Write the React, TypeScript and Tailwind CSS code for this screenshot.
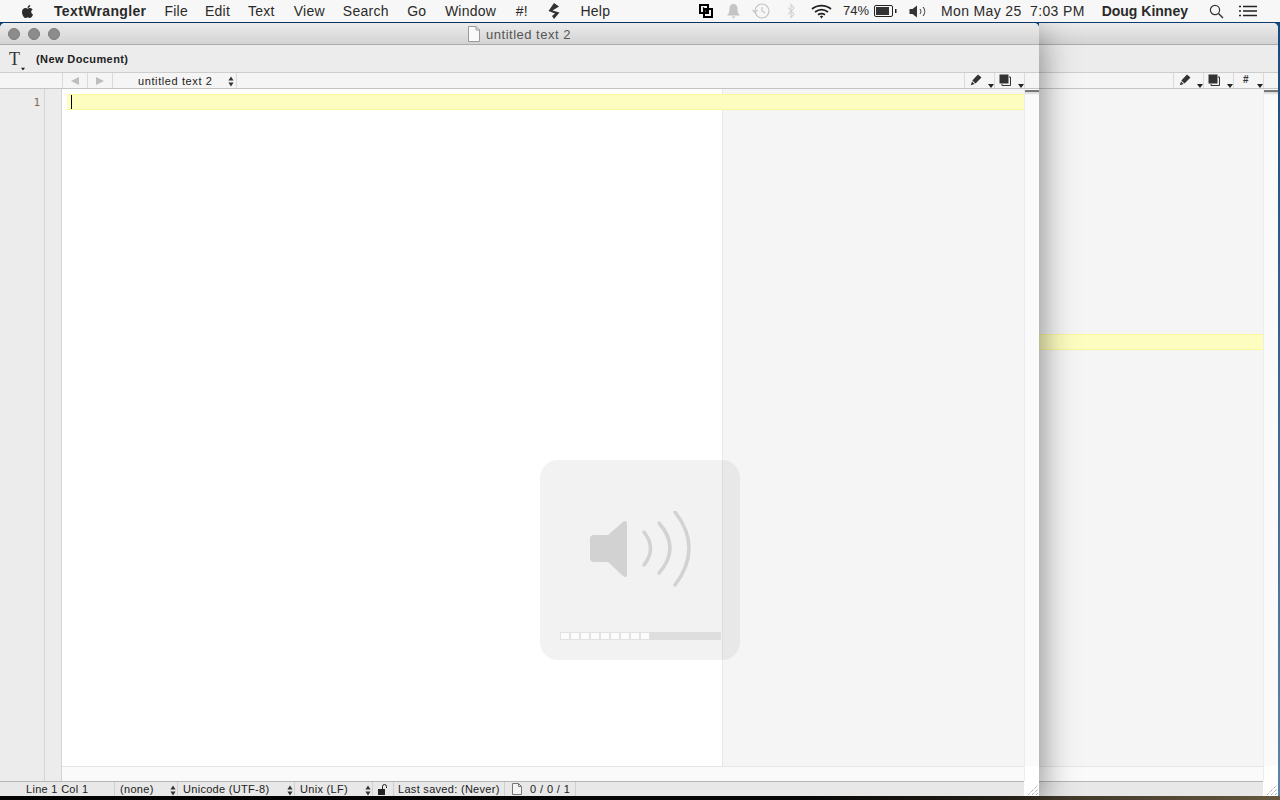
import React from "react";
import { FaApple } from "react-icons/fa";

const sans = "font-['Liberation_Sans',Arial,sans-serif]";

function Updown({ className = "" }: { className?: string }) {
  return (
    <svg width="6" height="11" viewBox="0 0 6 11" className={className}>
      <path d="M3 0.5 L5.6 4.4 H0.4 Z M3 10.5 L5.6 6.6 H0.4 Z" fill="#333" />
    </svg>
  );
}

function Caret({ className = "" }: { className?: string }) {
  return (
    <svg width="6" height="4" viewBox="0 0 6 4" className={className}>
      <path d="M0 0 H6 L3 4 Z" fill="#222" />
    </svg>
  );
}

function Pencil() {
  return (
    <svg width="12" height="12" viewBox="0 0 12 12">
      <path d="M8 0.5 L11.5 3.5 L5.5 9.5 L2.3 6.4 Z M2 7.4 L4.6 10 L0.8 11.2 Z" fill="#333" />
    </svg>
  );
}

function Docs() {
  return (
    <svg width="12" height="12" viewBox="0 0 12 12">
      <rect x="0.5" y="0.5" width="9" height="9" fill="#333" />
      <path d="M10 3 H11.5 V11.5 H3 V10" fill="none" stroke="#333" />
    </svg>
  );
}

function Tools({ hash }: { hash?: boolean }) {
  return (
    <div className="flex h-[15px] items-stretch">
      <div className="relative flex w-[30px] border-l border-[#dadada] pl-[5px] pt-[1px]">
        <Pencil />
        <Caret className="absolute left-[23px] top-[11px]" />
      </div>
      <div className="relative flex w-[30px] border-l border-[#dadada] pl-[4px] pt-[1px]">
        <Docs />
        <Caret className="absolute left-[23px] top-[11px]" />
      </div>
      {hash && (
        <div className={`relative flex w-[30px] border-l border-[#dadada] pl-[9px] text-[10px] font-bold leading-[14px] text-[#333] ${sans}`}>
          #
          <Caret className="absolute left-[23px] top-[11px]" />
        </div>
      )}
      <div className="w-px bg-[#dadada]" />
    </div>
  );
}

function Grip() {
  return (
    <div className="relative h-[15px] w-[15px] bg-white">
      <svg width="12" height="12" viewBox="0 0 12 12" className="absolute bottom-0 right-0">
        <path d="M1 11 L11 1 M5 11 L11 5 M9 11 L11 9" stroke="#8a8a8a" strokeWidth="1" strokeDasharray="1 1" fill="none" />
      </svg>
    </div>
  );
}

function Scrollbar() {
  return (
    <div className="flex w-[15px] flex-col border-l border-[#ececec] bg-[#fafafa]">
      <div className="mt-[1px] h-[5px] border-t-2 border-[#777] bg-gradient-to-b from-[#d0d0d0] to-[#fafafa]" />
      <div className="flex-1" />
      <div className="h-[15px] bg-white" />
    </div>
  );
}

function StatusCell({ w, label, pl = 5, arrows = true }: { w: number; label: string; pl?: number; arrows?: boolean }) {
  return (
    <div style={{ width: w, paddingLeft: pl }} className="relative flex items-center whitespace-nowrap border-r border-[#cfcfcf]">
      {label}
      {arrows && <Updown className="absolute right-[1px] top-[3px]" />}
    </div>
  );
}

const menu: [string, number][] = [
  ["File", 17],
  ["Edit", 18],
  ["Text", 19],
  ["View", 18],
  ["Search", 18.5],
  ["Go", 18.5],
  ["Window", 19.5],
  ["#!", 19.5],
];

export default function App() {
  return (
    <div className={`relative flex h-[800px] w-[1280px] flex-col overflow-hidden bg-gradient-to-b from-[#0f4a80] to-[#5a85a8] ${sans}`}>
      {/* menu bar */}
      <div className="relative z-20 flex h-[22px] items-center bg-[#f7f7f7] text-[14px] tracking-[0.25px] text-[#2a2a2a]">
        <FaApple className="ml-[20px] h-[15px] w-[15px] text-[#2c2c2c]" />
        <span className="ml-[19px] font-bold tracking-[0.35px]">TextWrangler</span>
        <div className="ml-[18px] flex items-center">
          {menu.map(([m, gap]) => (
            <span key={m} style={{ marginRight: gap }}>{m}</span>
          ))}
          <svg width="14" height="16" viewBox="0 0 14 16" className="mr-[19px]">
            <path d="M7 0 L12 3.5 L5.5 7.5 L12.5 9.5 L7 16 L5 13 L8 10.5 L1.5 8 Z" fill="#333" />
          </svg>
          <span>Help</span>
        </div>
        <div className="flex-1" />
        <div className="flex items-center">
          <svg width="14" height="14" viewBox="0 0 14 14" className="mr-[13px]">
            <path d="M1 1 H9 V9 H1 Z M5 5 H13 V13 H5 Z" fill="none" stroke="#000" strokeWidth="2" />
            <path d="M4 3.5 L8 7.5 M5 8 H8 V5" fill="none" stroke="#000" strokeWidth="1.2" />
          </svg>
          <svg width="15" height="16" viewBox="0 0 15 16" className="mr-[11px]">
            <path d="M7.5 1 C4.5 1 3.5 3.5 3.5 6 C3.5 9.5 2.5 11 1 12.5 H14 C12.5 11 11.5 9.5 11.5 6 C11.5 3.5 10.5 1 7.5 1 Z M5.5 13.5 H9.5 L7.5 15.5 Z" fill="#c4c4c4" />
          </svg>
          <svg width="18" height="16" viewBox="0 0 18 16" className="mr-[17px]">
            <circle cx="10" cy="8" r="7" fill="none" stroke="#c4c4c4" strokeWidth="1.2" />
            <path d="M10 4 V8 L13 10 M0.5 7 L3 9.5 L5.5 7" fill="none" stroke="#c4c4c4" strokeWidth="1.2" />
          </svg>
          <svg width="8" height="16" viewBox="0 0 8 16" className="mr-[16px]">
            <path d="M1 4.5 L7 11 L4 14.5 V1.5 L7 5 L1 11.5" fill="none" stroke="#d0d0d0" strokeWidth="1.1" />
          </svg>
          <svg width="21" height="15" viewBox="0 0 21 15" className="mr-[11px]">
            <path d="M1 5 C6.5 0.5 14.5 0.5 20 5 M4 8 C8 5 13 5 17 8 M7 10.8 C9.2 9.4 11.8 9.4 14 10.8" fill="none" stroke="#222" strokeWidth="1.8" />
            <path d="M8.8 12.4 L10.5 11.4 L12.2 12.4 L10.5 14.4 Z" fill="#222" />
          </svg>
          <span className="mr-[5px] text-[13px] tracking-normal">74%</span>
          <svg width="23" height="12" viewBox="0 0 23 12" className="mr-[12px]">
            <rect x="0.5" y="0.5" width="18" height="11" rx="1.5" fill="none" stroke="#222" />
            <rect x="2" y="2" width="13" height="8" fill="#333" />
            <rect x="21" y="4" width="1.5" height="4" fill="#222" />
          </svg>
          <svg width="19" height="13" viewBox="0 0 19 13" className="mr-[13px]">
            <path d="M0.5 4 H3.5 L8 0.5 V12.5 L3.5 9 H0.5 Z" fill="#333" />
            <path d="M11 4 C12.2 5.5 12.2 7.5 11 9 M14 2 C16.3 4.5 16.3 8.5 14 11" fill="none" stroke="#333" />
          </svg>
          <span className="mr-[17px] tracking-[0.35px]">Mon May 25&nbsp; 7:03 PM</span>
          <span className="mr-[21px] font-bold tracking-normal">Doug Kinney</span>
          <svg width="15" height="15" viewBox="0 0 15 15" className="mr-[16px]">
            <circle cx="6" cy="6" r="4.6" fill="none" stroke="#333" strokeWidth="1.2" />
            <path d="M9.5 9.5 L14 14" stroke="#333" strokeWidth="1.4" />
          </svg>
          <svg width="18" height="12" viewBox="0 0 18 12" className="-ml-[1px] mr-[23px]">
            <path d="M0 1.5 H2 M4 1.5 H18 M0 6 H2 M4 6 H18 M0 10.5 H2 M4 10.5 H18" stroke="#222" strokeWidth="1.4" />
          </svg>
        </div>
      </div>

      {/* desktop */}
      <div className="relative flex flex-1 flex-col">
        <div className="h-[1px] bg-[#0c3d70]" />
        <div className="flex h-[773px]">
          {/* front window */}
          <div className="relative z-10 flex w-[1039px] flex-col overflow-hidden rounded-t-[5px] bg-[#ececec] shadow-[0_10px_36px_rgba(0,0,0,0.5)]">
            <div className="relative flex h-[22px] items-center justify-center border-b border-[#acacac] bg-gradient-to-b from-[#ececec] to-[#d3d3d3] pt-[2px]">
              <div className="absolute left-[8px] top-[5px] flex gap-[8px]">
                <span className="h-[12px] w-[12px] rounded-full border border-[#7c7c7c] bg-[#8c8c8c]" />
                <span className="h-[12px] w-[12px] rounded-full border border-[#7c7c7c] bg-[#8c8c8c]" />
                <span className="h-[12px] w-[12px] rounded-full border border-[#7c7c7c] bg-[#8c8c8c]" />
              </div>
              <svg width="12" height="16" viewBox="0 0 12 16" className="-mt-[1px] mr-[6px]">
                <path d="M0.5 0.5 H8 L11.5 4 V15.5 H0.5 Z" fill="#fafafa" stroke="#9a9a9a" />
                <path d="M8 0.5 V4 H11.5" fill="none" stroke="#9a9a9a" />
              </svg>
              <span className="text-[13px] tracking-[0.5px] text-[#555]">untitled text 2</span>
            </div>
            <div className="flex h-[28px] items-center border-b border-[#cdcdcd] bg-[#ececec]">
              <div className="relative ml-[9px] h-[20px] w-[16px]">
                <span className="absolute left-0 top-0 font-['Liberation_Serif',serif] text-[18px] leading-[20px] text-[#333]">T</span>
                <Caret className="absolute left-[11px] top-[18px] scale-75" />
              </div>
              <span className="ml-[11px] pt-[2px] text-[11px] font-bold tracking-[0.4px] text-[#222]">(New Document)</span>
            </div>
            <div className="flex h-[16px] items-center justify-between border-b border-[#c4c4c4] bg-[#f5f5f5]">
              <div className="flex h-[15px] items-center">
                <div className="ml-[62px] flex h-[15px] w-[25px] items-center justify-center border-l border-[#dadada]">
                  <svg width="8" height="8" viewBox="0 0 8 8"><path d="M0 4 L8 0 V8 Z" fill="#bdbdbd" /></svg>
                </div>
                <div className="flex h-[15px] w-[25px] items-center justify-center border-l border-[#dadada]">
                  <svg width="8" height="8" viewBox="0 0 8 8"><path d="M8 4 L0 0 V8 Z" fill="#bdbdbd" /></svg>
                </div>
                <div className="relative flex h-[15px] w-[125px] items-center border-x border-[#dadada] pl-[25px] pt-[1px] text-[11px] tracking-[0.6px] text-[#222]">
                  untitled text 2
                  <Updown className="absolute right-[2px] top-[3px]" />
                </div>
              </div>
              <div className="mr-[14px]">
                <Tools />
              </div>
            </div>
            {/* editor */}
            <div className="relative flex flex-1 bg-white">
              <div className="flex w-[45px] justify-end border-r border-[#d4d4d4] bg-[#ececec] pr-[4px] pt-[7px] font-['DejaVu_Sans_Mono',monospace] text-[11px] leading-[14px] text-[#7d6a58]">
                1
              </div>
              <div className="w-[17px] border-r border-[#d4d4d4] bg-[#ececec]" />
              <div className="flex flex-1 flex-col">
                <div className="relative flex flex-1">
                  <div className="w-[660px] bg-white" />
                  <div className="flex-1 border-l border-[#e8e8e8] bg-[#f5f5f5]" />
                  <div className="absolute left-[5px] right-0 top-[5px] h-[16px] border-y border-[#faf79a] bg-[#fdfdc0]">
                    <div className="ml-[4px] h-[14px] w-px bg-black" />
                  </div>
                </div>
                <div className="h-[15px] border-t border-[#e6e6e6] bg-[#fafafa]" />
              </div>
              <Scrollbar />
            </div>
            {/* status */}
            <div className="relative flex h-[15px] items-stretch bg-[#e8e8e8] text-[11px] leading-[14px] tracking-[0.3px] text-[#222]">
              <div className="flex flex-1 items-stretch border-t border-[#b5b5b5]">
                <StatusCell w={115} label="Line 1 Col 1" pl={26} arrows={false} />
                <StatusCell w={63} label="(none)" />
                <StatusCell w={117} label="Unicode (UTF-8)" />
                <StatusCell w={78} label="Unix (LF)" />
                <div className="flex w-[21px] items-center justify-center border-r border-[#cfcfcf]">
                  <svg width="10" height="11" viewBox="0 0 10 11">
                    <rect x="0" y="5" width="7" height="6" fill="#222" />
                    <path d="M4.5 5 V2.5 A2 2 0 0 1 8.5 2.5 V4" fill="none" stroke="#222" />
                  </svg>
                </div>
                <StatusCell w={111} label="Last saved: (Never)" pl={4} arrows={false} />
                <div className="flex w-[71px] items-center border-r border-[#cfcfcf] pl-[7px] tracking-[0.4px]">
                  <svg width="10" height="12" viewBox="0 0 10 12" className="mr-[8px]">
                    <path d="M0.5 0.5 H6.5 L9.5 3.5 V11.5 H0.5 Z M6.5 0.5 V3.5 H9.5" fill="#f4f4f4" stroke="#777" />
                  </svg>
                  0 / 0 / 1
                </div>
              </div>
              <Grip />
            </div>
          </div>

          {/* back window */}
          <div className="flex w-[239px] flex-col overflow-hidden rounded-tr-[5px] bg-[#ececec]">
            <div className="h-[22px] border-b border-[#acacac] bg-gradient-to-b from-[#ececec] to-[#d3d3d3]" />
            <div className="h-[28px] border-b border-[#cdcdcd] bg-[#ececec]" />
            <div className="flex h-[16px] justify-end border-b border-[#c4c4c4] bg-[#f5f5f5] pr-[14px]">
              <Tools hash />
            </div>
            <div className="flex flex-1">
              <div className="flex flex-1 flex-col">
                <div className="flex flex-1 flex-col bg-[#f5f5f5]">
                  <div className="mt-[245px] h-[16px] border-y border-[#faf79a] bg-[#fdfdc0]" />
                </div>
                <div className="h-[15px] border-t border-[#e6e6e6] bg-[#fafafa]" />
              </div>
              <Scrollbar />
            </div>
            <div className="flex h-[15px]">
              <div className="flex-1 border-t border-[#b5b5b5] bg-[#e8e8e8]" />
              <Grip />
            </div>
          </div>
        </div>
        <div className="flex-1 bg-[linear-gradient(90deg,#050505_0%,#0a0a0a_62%,#3a3226_80%,#66583f_100%)]" />
      </div>

      {/* volume HUD */}
      <div className="absolute left-[540px] top-[460px] z-30 flex h-[200px] w-[200px] flex-col items-start rounded-[18px] bg-[#0000000d] pl-[20px] pt-[51px]">
        <svg width="110" height="76" viewBox="0 0 110 76" className="ml-[29px]">
          <path d="M1 28 Q1 24 5 24 H19 L34 11 Q38 8 38 13 V63 Q38 68 34 65 L19 51 H5 Q1 51 1 47 Z" fill="#d2d2d2" />
          <g fill="none" stroke="#d2d2d2" strokeWidth="3.5" strokeLinecap="round">
            <path d="M55 21 Q68 37.5 55 54" />
            <path d="M70 12 Q92 37 70 62" />
            <path d="M86 1 Q114 37 86 74" />
          </g>
        </svg>
        <div className="mt-[45px] flex h-[8px] w-[161px] bg-[#dedede]">
          {Array.from({ length: 9 }).map((_, i) => (
            <div key={i} className="h-[8px] w-[10px] border border-[#e2e2e2] bg-[#fcfcfc]" />
          ))}
        </div>
      </div>
    </div>
  );
}
